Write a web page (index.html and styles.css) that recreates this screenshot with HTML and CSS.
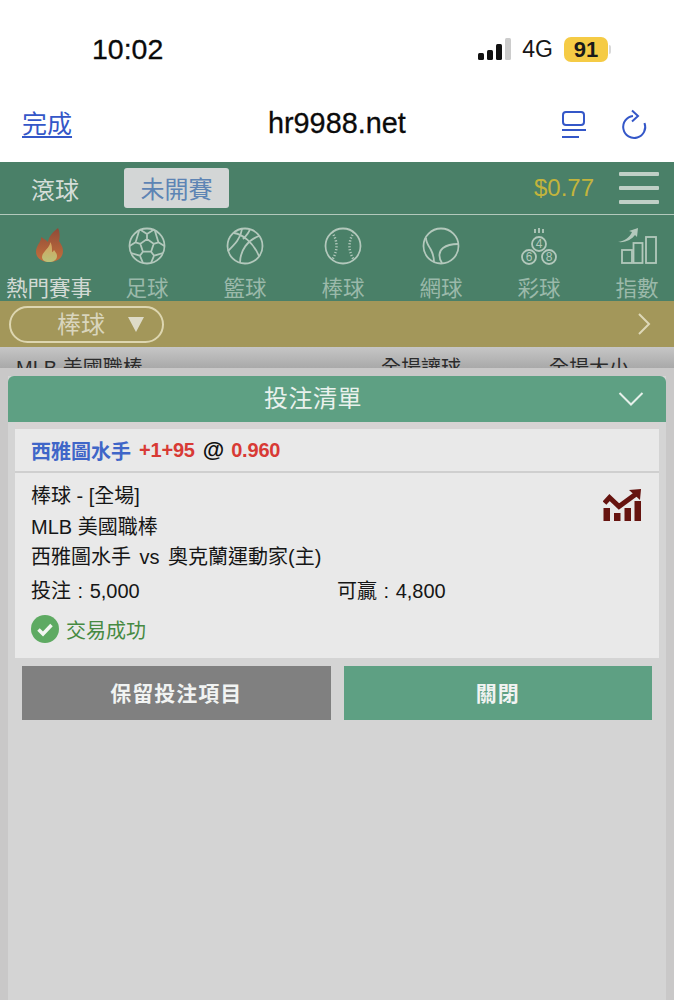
FILE: index.html
```html
<!DOCTYPE html>
<html lang="zh-Hant">
<head>
<meta charset="utf-8">
<title>hr9988.net</title>
<link rel="stylesheet" href="styles.css">
</head>
<body>
<div class="screen">
  <header class="status">
    <span class="time">10:02</span>
    <div class="status-right">
      <div class="signal"><i class="b1"></i><i class="b2"></i><i class="b3"></i><i class="b4"></i></div>
      <span class="net">4G</span>
      <span class="battery">91</span>
      <span class="nub"></span>
    </div>
  </header>
  <nav class="browser">
    <a class="done">完成</a>
    <span class="url">hr9988.net</span>
    <div class="browser-icons">
      <svg width="26" height="30" viewBox="0 0 26 30" fill="none" stroke="#3457c8" stroke-width="2"><rect x="2" y="3" width="21" height="13" rx="3"/><path d="M1 21h24M1 28h17"/></svg>
      <svg width="28" height="32" viewBox="0 0 28 32" fill="none" stroke="#3457c8" stroke-width="2"><path d="M24.500 15A11 11 0 1 1 13 8"/><path d="M12 2.500l6 5.500-6 5.500"/></svg>
    </div>
  </nav>
  <section class="tabs">
    <div class="tab">滾球</div>
    <div class="tab tab-on">未開賽</div>
    <div class="balance">$0.77</div>
    <div class="burger"><i></i><i></i><i></i></div>
  </section>
  <section class="sports">
    <div class="sport sport-on">
      <svg width="40" height="40" viewBox="0 0 40 40"><defs><linearGradient id="fl" x1="0" y1="0" x2="0" y2="1"><stop offset="0" stop-color="#8f4a38"/><stop offset="1" stop-color="#c4703c"/></linearGradient><linearGradient id="fi" x1="0" y1="0" x2="0" y2="1"><stop offset="0" stop-color="#d6a05c"/><stop offset="1" stop-color="#b9c278"/></linearGradient></defs><path d="M29 2C24 6 20 10 19 16C17 14 14 12 12 11C13 15 7 19 7 26C7 32 13 36 20 36C28 36 34 32 34 25C34 20 31 17 30 15C31 11 31 6 29 2Z" fill="url(#fl)"/><path d="M21 16C22 21 13 26 13 31C13 34 16 36 20 36C24 36 28 34 28 30C28 27 26 26 25 24C24 26 23 26 23 26C23 22 23 18 21 16Z" fill="url(#fi)"/></svg>
      <span>熱門賽事</span>
    </div>
    <div class="sport">
      <svg width="40" height="40" viewBox="0 0 40 40" class="ico"><circle cx="20" cy="20" r="17.500"/><path d="M20 13l6.700 4.800-2.600 7.900h-8.200l-2.600-7.900zM20 13V8l-7-4.500M20 8l7-4.500M26.700 17.800l4.700-1.500L28 5M31.400 16.300l6 3.700M24.100 25.700l3 4 8.900-2.700M27.100 29.700L24 37M15.900 25.700l-3 4L4 27M12.900 29.700L16 37M13.300 17.800l-4.700-1.500L12 5M8.600 16.300l-6 3.700"/></svg>
      <span>足球</span>
    </div>
    <div class="sport">
      <svg width="40" height="40" viewBox="0 0 40 40" class="ico"><circle cx="20" cy="20" r="17.500"/><path d="M17 3C16 12 10 18 3 25M9 7c8 1 19 9 25 23M34 10C23 14 15 24 15 37M25 3c-1 4-4 7-7 10"/></svg>
      <span>籃球</span>
    </div>
    <div class="sport">
      <svg width="40" height="40" viewBox="0 0 40 40" class="ico"><circle cx="20" cy="20" r="17.500"/><path class="stitch" d="M9 6Q18 20 9 34M31 6Q22 20 31 34"/></svg>
      <span>棒球</span>
    </div>
    <div class="sport">
      <svg width="40" height="40" viewBox="0 0 40 40" class="ico"><circle cx="20" cy="20" r="17.500"/><path d="M5 12c0 5 3 8 5 12 2 4 3 8 3 12M37 18c-6 0-11 1-15 4-4 3-5 9-1 15"/></svg>
      <span>網球</span>
    </div>
    <div class="sport">
      <svg width="40" height="40" viewBox="0 0 40 40" class="ico"><circle cx="20" cy="18" r="7"/><circle cx="10" cy="31" r="7"/><circle cx="30" cy="31" r="7"/><path d="M16 3v4M20 2v5M24 3v4"/><text x="20" y="22" class="ball">4</text><text x="10" y="35" class="ball">6</text><text x="30" y="35" class="ball">8</text></svg>
      <span>彩球</span>
    </div>
    <div class="sport">
      <svg width="40" height="40" viewBox="0 0 40 40" class="ico"><rect x="5" y="24" width="10" height="13"/><rect x="16.500" y="17" width="9" height="20"/><rect x="29" y="11" width="10" height="26"/><path class="solid" d="M1 16C8 15 13 11 15 6l-3-1 9-3-1 9-2-2C15 13 9 17 1 16z"/></svg>
      <span>指數</span>
    </div>
  </section>
  <section class="filter">
    <div class="pill"><span class="pill-text">棒球</span><span class="tri"></span></div>
    <svg width="14" height="24" viewBox="0 0 14 24" fill="none" stroke="#ded8b8" stroke-width="2"><path d="M2 2l10 10L2 22"/></svg>
  </section>
  <section class="list">
    <span class="list-league">MLB 美國職棒</span>
    <span class="list-h1">全場讓球</span>
    <span class="list-h2">全場大小</span>
  </section>

  <aside class="sheet">
    <div class="panel">
      <div class="panel-head">
        <span>投注清單</span>
        <svg class="chev" width="26" height="16" viewBox="0 0 26 16" fill="none" stroke="#e6f0ea" stroke-width="2"><path d="M1.500 2L13 13.500 24.500 2"/></svg>
      </div>
      <div class="card">
        <div class="card-head">
          <b class="team">西雅圖水手</b>
          <b class="odd">+1+95</b>
          <b class="at">@</b>
          <b class="odd">0.960</b>
        </div>
        <div class="card-body">
          <svg class="chart" width="38" height="33" viewBox="0 0 38 33" fill="#661410"><path d="M1.500 14L6.500 8.500 16 17.500 33 5" fill="none" stroke="#661410" stroke-width="5"/><path d="M26 1L38 0l-1 11z"/><rect x="0.500" y="19" width="6.500" height="13"/><rect x="11" y="24" width="6.500" height="8"/><rect x="21.500" y="19" width="6.500" height="13"/><rect x="31.500" y="12" width="6.500" height="20"/></svg>
          <p>棒球 - [全場]</p>
          <p>MLB 美國職棒</p>
          <p class="match">西雅圖水手 vs 奧克蘭運動家(主)</p>
          <div class="stake"><span>投注 : 5,000</span><span>可贏 : 4,800</span></div>
          <div class="ok">
            <svg width="28" height="28" viewBox="0 0 28 28"><circle cx="14" cy="14" r="14" fill="#5eaa62"/><path d="M7.500 14.500l4.500 4.500 8.500-9" fill="none" stroke="#f3f6f1" stroke-width="3.500"/></svg>
            <span>交易成功</span>
          </div>
        </div>
      </div>
      <div class="actions">
        <button class="btn btn-keep"><span>保留投注項目</span></button>
        <button class="btn btn-close"><span>關閉</span></button>
      </div>
    </div>
  </aside>
</div>
</body>
</html>
```
FILE: styles.css
```css
* { box-sizing: border-box; }
html, body { margin: 0; padding: 0; background: #fff; }
body { font-family: "Liberation Sans", "Noto Sans CJK TC", sans-serif; }
.screen { position: relative; width: 674px; height: 1000px; overflow: hidden; }

.status { height: 90px; display: flex; justify-content: space-between; align-items: center; padding: 8px 63px 0 92px; }
.time { font-size: 28.500px; color: #0a0a0a; -webkit-text-stroke: .3px #0a0a0a; }
.status-right { display: flex; align-items: center; }
.signal { display: flex; align-items: flex-end; gap: 3px; height: 22px; margin-right: 11px; }
.signal i { display: block; width: 6px; background: #111; border-radius: 1.500px; }
.signal .b1 { height: 7px; }
.signal .b2 { height: 10px; }
.signal .b3 { height: 16px; }
.signal .b4 { height: 22px; background: #ccc; }
.net { font-size: 23px; color: #161616; margin-right: 11px; }
.battery { width: 44px; height: 25px; background: #f5cb45; border-radius: 7px; font-size: 22px; font-weight: 700; line-height: 25px; text-align: center; color: #1a1a1a; }
.nub { width: 2px; height: 9px; background: #d9d9d9; margin-left: 1px; border-radius: 0 2px 2px 0; }

.browser { height: 72px; display: flex; align-items: center; justify-content: space-between; padding: 0 26px 5px 22px; position: relative; }
.done { font-size: 25px; color: #3457c8; text-decoration: underline; text-underline-offset: 3px; text-decoration-thickness: 1.500px; margin-bottom: 4px; }
.url { position: absolute; left: 268px; font-size: 28.800px; color: #0b0b0b; -webkit-text-stroke: .3px #0b0b0b; }
.browser-icons { display: flex; align-items: center; gap: 33px; }

.tabs { height: 53px; background: #4a8068; border-bottom: 1px solid #b3c9bc; display: flex; align-items: center; padding: 0 15px 0 31px; }
.tab { font-size: 24px; color: #d5ddd8; }
.tab-on { margin-left: 45px; width: 105px; height: 40px; padding-top: 3px; line-height: 37px; text-align: center; background: #d3d6d6; color: #5d84b4; border-radius: 3px; }
.balance { margin-left: auto; font-size: 24px; color: #c2b43c; margin-right: 25px; }
.burger { width: 40px; display: flex; flex-direction: column; gap: 10px; }
.burger i { display: block; height: 4px; background: #c0cfc6; border-radius: 1px; }

.sports { height: 86px; background: #4a8068; display: flex; overflow: hidden; padding-top: 11px; }
.sport { flex: 0 0 98px; display: flex; flex-direction: column; align-items: center; gap: 11px; font-size: 21.500px; line-height: 24px; color: #9bb9aa; white-space: nowrap; }
.sport-on { color: #d2dad5; }
.ico { fill: none; stroke: #b3c8bc; stroke-width: 1.800; }
.stitch { stroke-width: 2.500; stroke-dasharray: 1.200 1.800; }
.solid { fill: #b3c8bc; stroke: none; }
.ball { font-size: 12px; text-anchor: middle; fill: #b3c8bc; stroke: none; }

.filter { height: 46px; background: #a3975a; display: flex; align-items: center; justify-content: space-between; padding: 0 23px 0 9px; }
.pill { width: 155px; height: 37px; border: 2px solid #ddd6b0; border-radius: 19px; display: flex; align-items: center; padding-left: 46px; gap: 23px; font-size: 24px; color: #d9d5bd; }
.pill-text { margin-bottom: 3px; }
.tri { width: 0; height: 0; border-left: 8.500px solid transparent; border-right: 8.500px solid transparent; border-top: 15px solid #dedbc8; }

.list { height: 21px; background: linear-gradient(#c6c6c6, #a9a9a9); position: relative; overflow: hidden; font-size: 20px; color: #2c2c2c; }
.list span { position: absolute; top: 5px; }
.list-league { left: 16px; }
.list-h1 { left: 381px; }
.list-h2 { left: 549px; }

.sheet { position: absolute; left: 0; right: 0; top: 368px; bottom: 0; background: #c9c8c8; padding-top: 8px; }
.panel { margin: 0 8px; height: 100%; background: #d4d4d4; }
.panel-head { height: 46px; background: #5ea083; border-radius: 6px 6px 0 0; display: flex; align-items: center; justify-content: center; padding: 0 48px 5px 0; position: relative; font-size: 24px; color: #e9f1ed; letter-spacing: .5px; }
.chev { position: absolute; right: 22px; top: 15px; }

.card { margin: 0 7px; padding-top: 7px; background: #d7d3d3; }
.card-head { height: 44px; background: #e9e9e9; border-bottom: 2px solid #cfcfcf; display: flex; align-items: center; gap: 8px; padding-left: 16px; font-size: 20px; }
.team { color: #3f66c8; }
.odd { color: #d83a35; letter-spacing: -.2px; }
.at { color: #111; font-size: 22px; margin-right: -1px; }
.card-body { position: relative; height: 185px; background: #e9e9e9; padding: 8px 16px 0; font-size: 20px; color: #161616; }
.card-body p { margin: 0; line-height: 30.500px; }
.match { word-spacing: 3px; }
.chart { position: absolute; right: 18px; top: 16px; }
.stake { display: flex; line-height: 30px; margin-top: 3px; word-spacing: 1px; }
.stake span { width: 307px; }
.ok { display: flex; align-items: center; gap: 7px; margin-top: 9px; color: #468a42; }

.actions { display: flex; gap: 13px; padding: 8px 14px 0; background: #d4d4d4; }
.btn { flex: 1; height: 54px; border: 0; border-radius: 0; padding: 0 0 3px; font: 700 21px "Liberation Sans", "Noto Sans CJK TC", sans-serif; letter-spacing: 1px; color: #f1f3f2; }
.btn-keep { background: #808080; }
.btn-close { background: #5ea083; }
```
